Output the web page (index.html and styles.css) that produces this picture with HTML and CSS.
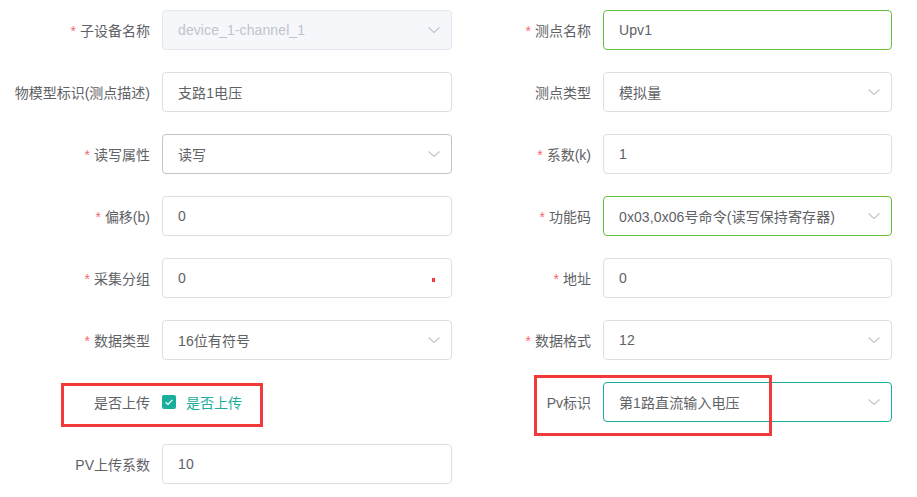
FILE: index.html
```html
<!DOCTYPE html>
<html lang="zh-CN">
<head>
<meta charset="utf-8">
<title>测点编辑</title>
<link rel="stylesheet" href="styles.css">
</head>
<body>
<form class="form">
  <div class="item">
    <label class="label label-l"><span class="req">*</span>子设备名称</label>
    <div class="control disabled"><span class="value">device_1-channel_1</span><svg class="arrow" viewBox="0 0 12 6"><path d="M0.5 0.5 L6 5.5 L11.5 0.5"/></svg></div>
  </div>
  <div class="item">
    <label class="label label-r"><span class="req">*</span>测点名称</label>
    <div class="control success"><span class="value">Upv1</span></div>
  </div>

  <div class="item">
    <label class="label label-l">物模型标识(测点描述)</label>
    <div class="control"><span class="value">支路1电压</span></div>
  </div>
  <div class="item">
    <label class="label label-r">测点类型</label>
    <div class="control"><span class="value">模拟量</span><svg class="arrow" viewBox="0 0 12 6"><path d="M0.5 0.5 L6 5.5 L11.5 0.5"/></svg></div>
  </div>

  <div class="item">
    <label class="label label-l"><span class="req">*</span>读写属性</label>
    <div class="control hover"><span class="value">读写</span><svg class="arrow" viewBox="0 0 12 6"><path d="M0.5 0.5 L6 5.5 L11.5 0.5"/></svg></div>
  </div>
  <div class="item">
    <label class="label label-r"><span class="req">*</span>系数(k)</label>
    <div class="control"><span class="value">1</span></div>
  </div>

  <div class="item">
    <label class="label label-l"><span class="req">*</span>偏移(b)</label>
    <div class="control"><span class="value">0</span></div>
  </div>
  <div class="item">
    <label class="label label-r"><span class="req">*</span>功能码</label>
    <div class="control success"><span class="value">0x03,0x06号命令(读写保持寄存器)</span><svg class="arrow" viewBox="0 0 12 6"><path d="M0.5 0.5 L6 5.5 L11.5 0.5"/></svg></div>
  </div>

  <div class="item">
    <label class="label label-l"><span class="req">*</span>采集分组</label>
    <div class="control"><span class="value">0</span><span class="dot"></span></div>
  </div>
  <div class="item">
    <label class="label label-r"><span class="req">*</span>地址</label>
    <div class="control"><span class="value">0</span></div>
  </div>

  <div class="item">
    <label class="label label-l"><span class="req">*</span>数据类型</label>
    <div class="control"><span class="value">16位有符号</span><svg class="arrow" viewBox="0 0 12 6"><path d="M0.5 0.5 L6 5.5 L11.5 0.5"/></svg></div>
  </div>
  <div class="item">
    <label class="label label-r"><span class="req">*</span>数据格式</label>
    <div class="control"><span class="value">12</span><svg class="arrow" viewBox="0 0 12 6"><path d="M0.5 0.5 L6 5.5 L11.5 0.5"/></svg></div>
  </div>

  <div class="item">
    <label class="label label-l">是否上传</label>
    <div class="check-wrap">
      <span class="checkbox"><svg viewBox="0 0 14 14"><path d="M3.6 7.2 L6 9.4 L10.4 4.8"/></svg></span>
      <span class="check-text">是否上传</span>
    </div>
    <span class="mark mark-1"></span>
  </div>
  <div class="item">
    <label class="label label-r">Pv标识</label>
    <div class="control focus"><span class="value">第1路直流输入电压</span><svg class="arrow" viewBox="0 0 12 6"><path d="M0.5 0.5 L6 5.5 L11.5 0.5"/></svg></div>
    <span class="mark mark-2"></span>
  </div>

  <div class="item">
    <label class="label label-l">PV上传系数</label>
    <div class="control"><span class="value">10</span></div>
  </div>
</form>
</body>
</html>
```

FILE: styles.css
```css
* { box-sizing: border-box; }
html, body { margin: 0; padding: 0; background: #fff; }
body {
  font-family: "Liberation Sans", "Noto Sans CJK SC", sans-serif;
  font-size: 14px;
  color: #606266;
}
.form {
  display: grid;
  grid-template-columns: 452px 440px;
  row-gap: 22px;
  padding-top: 10px;
}
.item {
  position: relative;
  display: flex;
  align-items: center;
  height: 40px;
}
.label {
  flex: none;
  text-align: right;
  padding-right: 12px;
  color: #606266;
  font-size: 14px;
  white-space: nowrap;
}
.label-l { width: 162px; }
.label-r { width: 151px; }
.req { color: #f56c6c; margin-right: 4px; }
.control {
  flex: 1;
  height: 40px;
  border: 1px solid #dcdfe6;
  border-radius: 4px;
  display: flex;
  align-items: center;
  padding: 0 15px;
  position: relative;
  font-size: 14px;
  color: #606266;
}
.control .value { flex: 1; white-space: nowrap; letter-spacing: 0.1px; }
.control.disabled { background: #f5f7fa; border-color: #e4e7ed; color: #c0c4cc; }
.control.success { border-color: #67c23a; }
.control.hover { border-color: #c0c4cc; }
.control.focus { border-color: #1aae9c; }
.arrow {
  width: 12px;
  height: 6px;
  fill: none;
  stroke: #c0c4cc;
  stroke-width: 1.1;
  margin-right: -4px;
}
.dot {
  position: absolute;
  right: 16px;
  top: 19px;
  width: 3px;
  height: 4px;
  background: #f33b3b;
}
.check-wrap {
  display: flex;
  align-items: center;
  gap: 10px;
}
.checkbox {
  width: 14px;
  height: 14px;
  border-radius: 2px;
  background: #1aae9c;
  display: inline-flex;
}
.checkbox svg {
  width: 14px;
  height: 14px;
  fill: none;
  stroke: #fff;
  stroke-width: 1.2;
}
.check-text { color: #1aae9c; font-size: 14px; }
.mark {
  position: absolute;
  border: 3px solid #f23a3a;
  pointer-events: none;
}
.mark-1 { left: 61px; top: 1px; width: 202px; height: 44px; }
.mark-2 { left: 82px; top: -7px; width: 238px; height: 61px; }
```
